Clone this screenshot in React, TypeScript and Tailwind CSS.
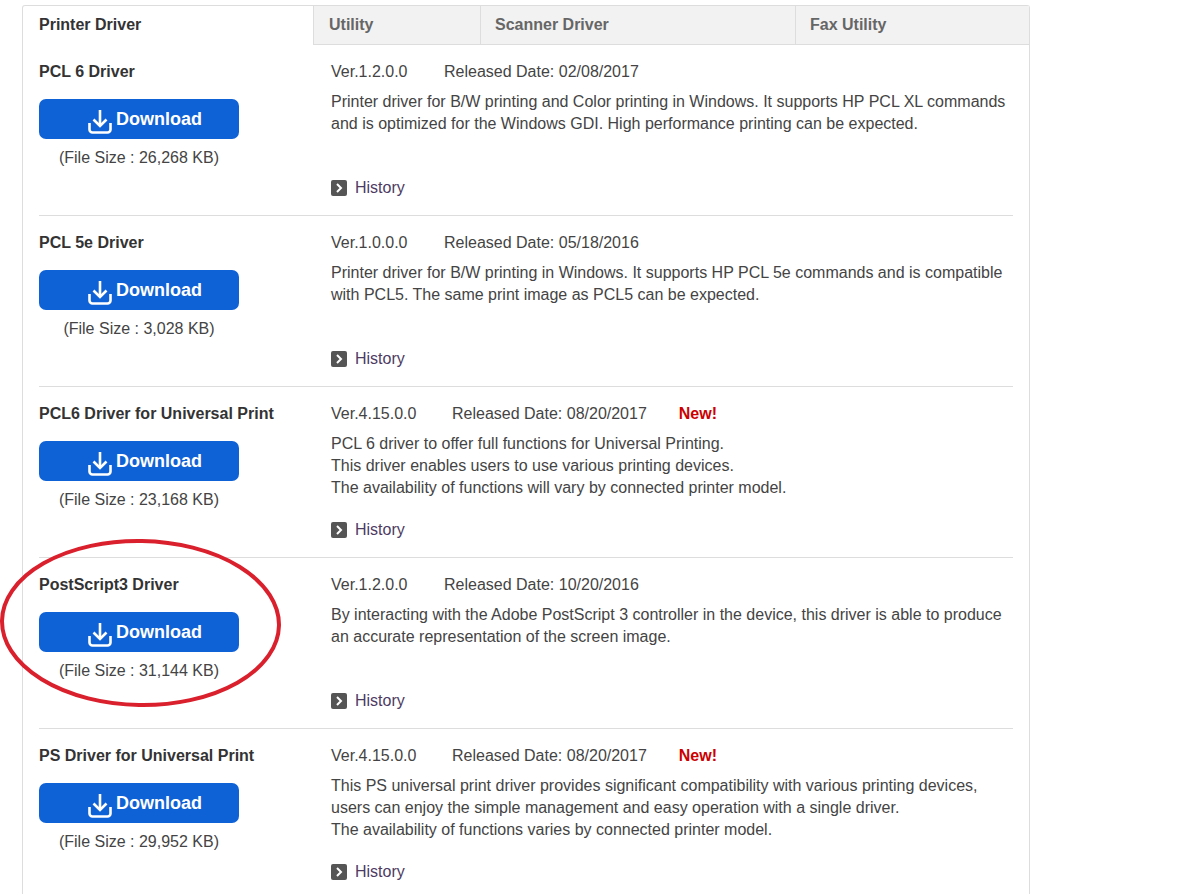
const drivers = [
  {
    name: "PCL 6 Driver",
    size: "26,268",
    ver: "1.2.0.0",
    date: "02/08/2017",
    lines: [
      "Printer driver for B/W printing and Color printing in Windows. It supports HP PCL XL commands",
      "and is optimized for the Windows GDI. High performance printing can be expected.",
    ],
  },
  {
    name: "PCL 5e Driver",
    size: "3,028",
    ver: "1.0.0.0",
    date: "05/18/2016",
    lines: [
      "Printer driver for B/W printing in Windows. It supports HP PCL 5e commands and is compatible",
      "with PCL5. The same print image as PCL5 can be expected.",
    ],
  },
  {
    name: "PCL6 Driver for Universal Print",
    size: "23,168",
    ver: "4.15.0.0",
    date: "08/20/2017",
    isNew: true,
    lines: [
      "PCL 6 driver to offer full functions for Universal Printing.",
      "This driver enables users to use various printing devices.",
      "The availability of functions will vary by connected printer model.",
    ],
  },
  {
    name: "PostScript3 Driver",
    size: "31,144",
    ver: "1.2.0.0",
    date: "10/20/2016",
    lines: [
      "By interacting with the Adobe PostScript 3 controller in the device, this driver is able to produce",
      "an accurate representation of the screen image.",
    ],
  },
  {
    name: "PS Driver for Universal Print",
    size: "29,952",
    ver: "4.15.0.0",
    date: "08/20/2017",
    isNew: true,
    lines: [
      "This PS universal print driver provides significant compatibility with various printing devices,",
      "users can enjoy the simple management and easy operation with a single driver.",
      "The availability of functions varies by connected printer model.",
    ],
  },
];

function DownloadIcon() {
  return (
    <svg className="mt-[5px]" width="24" height="24" viewBox="0 0 24 24" fill="none" stroke="white" strokeWidth="2.6">
      <path d="M12 0v16" />
      <path d="M5.5 9.5l6.5 6.5 6.5-6.5" />
      <path d="M1.5 13v6.5a3 3 0 0 0 3 3h15a3 3 0 0 0 3-3V13" />
    </svg>
  );
}

function DriverRow({ driver }: { driver: (typeof drivers)[number] }) {
  return (
    <div className="flex h-[171px] border-b border-[#dddddd] pt-[17px]">
      <div className="w-[292px] shrink-0">
        <h3 className="text-[16px] leading-5 font-bold text-[#333333]">{driver.name}</h3>
        <button
          type="button"
          className="mt-[17px] flex h-10 w-[200px] items-center justify-center gap-1 rounded-[7px] bg-[#0f62d6] pl-3 text-[18px] font-bold text-white"
        >
          <DownloadIcon />
          <span>Download</span>
        </button>
        <p className="mt-2 w-[200px] text-center text-[16px] leading-[22px] text-[#444444]">
          (File Size : {driver.size} KB)
        </p>
      </div>
      <div className="flex flex-1 flex-col pb-4 text-[16px] text-[#444444]">
        <div className="flex h-5 items-center leading-5">
          <span className="w-[113px]">Ver.{driver.ver}</span>
          <span className={driver.isNew ? "ml-2" : ""}>Released Date: {driver.date}</span>
          {driver.isNew && <span className="ml-8 font-bold text-[#cc0000]">New!</span>}
        </div>
        <div className="mt-[9px] leading-[22px]">
          {driver.lines.map((line) => (
            <p key={line}>{line}</p>
          ))}
        </div>
        <a className="mt-auto flex h-[22px] items-center gap-2 text-[#4d3b63]">
          <span className="flex h-4 w-4 items-center justify-center rounded-[2px] bg-[#555555]">
            <svg width="10" height="10" viewBox="0 0 10 10" fill="none" stroke="white" strokeWidth="2">
              <path d="M3 1l4 4-4 4" />
            </svg>
          </span>
          History
        </a>
      </div>
    </div>
  );
}

export default function App() {
  return (
    <div
      className="relative h-[894px] w-[1192px] overflow-hidden bg-white pt-[5px] pl-[22px]"
      style={{ fontFamily: '"Liberation Sans", Arial, sans-serif' }}
    >
      <div className="h-[1000px] w-[1008px] rounded-t-[3px] border-x border-t border-[#dddddd]">
        <div className="flex h-[39px] text-[16px] font-bold">
          <div className="flex w-[290px] items-center border-b border-transparent pl-4 text-[#333333]">Printer Driver</div>
          <div className="flex w-[167px] items-center border-b border-l border-[#dddddd] bg-[#f2f2f2] pl-[15px] text-[#666666]">
            Utility
          </div>
          <div className="flex w-[315px] items-center border-b border-l border-[#dddddd] bg-[#f2f2f2] pl-[14px] text-[#666666]">
            Scanner Driver
          </div>
          <div className="flex flex-1 items-center border-b border-l border-[#dddddd] bg-[#f2f2f2] pl-[14px] text-[#666666]">
            Fax Utility
          </div>
        </div>
        <div className="mx-4">
          {drivers.map((d) => (
            <DriverRow key={d.name} driver={d} />
          ))}
        </div>
      </div>
      <svg className="pointer-events-none absolute top-[536px] left-0" width="290" height="176" viewBox="0 0 290 176" fill="none">
        <ellipse cx="140.5" cy="87" rx="138.5" ry="82" stroke="#d9202c" strokeWidth="4" transform="rotate(1 140 87)" />
      </svg>
    </div>
  );
}
